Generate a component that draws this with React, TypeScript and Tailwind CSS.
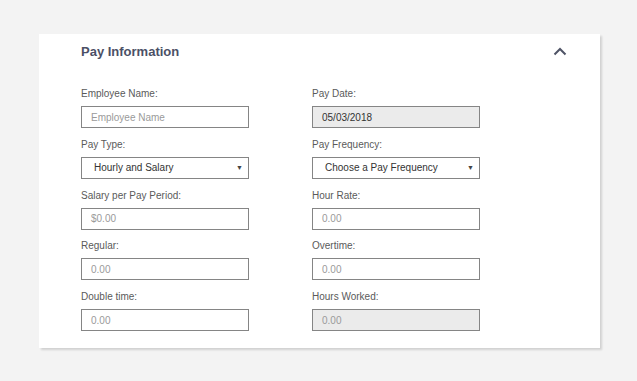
import type { ReactNode } from 'react';

type Field = {
  label: string;
  kind: 'text' | 'select' | 'readonly';
  value?: string;
  placeholder?: string;
};

const leftFields: Field[] = [
  { label: 'Employee Name:', kind: 'text', placeholder: 'Employee Name' },
  { label: 'Pay Type:', kind: 'select', value: 'Hourly and Salary' },
  { label: 'Salary per Pay Period:', kind: 'text', placeholder: '$0.00' },
  { label: 'Regular:', kind: 'text', placeholder: '0.00' },
  { label: 'Double time:', kind: 'text', placeholder: '0.00' },
];

const rightFields: Field[] = [
  { label: 'Pay Date:', kind: 'readonly', value: '05/03/2018' },
  { label: 'Pay Frequency:', kind: 'select', value: 'Choose a Pay Frequency' },
  { label: 'Hour Rate:', kind: 'text', placeholder: '0.00' },
  { label: 'Overtime:', kind: 'text', placeholder: '0.00' },
  { label: 'Hours Worked:', kind: 'readonly', placeholder: '0.00' },
];

function Control({ field }: { field: Field }) {
  const base = 'flex h-[22px] w-full items-center border border-[#858585] text-[10px]';

  if (field.kind === 'select') {
    return (
      <div className={`${base} justify-between bg-white pr-[5px] pl-[12px] text-[#333]`}>
        <span>{field.value}</span>
        <span className="text-[7px] leading-none text-[#444]">▼</span>
      </div>
    );
  }

  if (field.kind === 'readonly') {
    return (
      <div className={`${base} bg-[#ebebeb] pl-[9px] ${field.value ? 'text-[#333]' : 'text-[#9a9a9a]'}`}>
        {field.value ?? field.placeholder}
      </div>
    );
  }

  return (
    <div className={`${base} bg-white pl-[9px] text-[#9a9a9a]`}>
      {field.value ?? field.placeholder}
    </div>
  );
}

function Column({ fields }: { fields: Field[] }): ReactNode {
  return (
    <div className="flex w-[168px] flex-col gap-y-[8.75px]">
      {fields.map((field) => (
        <div key={field.label} className="flex flex-col">
          <label className="mb-[5px] text-[10px] leading-[15px] text-[#5a5a5a]">{field.label}</label>
          <Control field={field} />
        </div>
      ))}
    </div>
  );
}

export default function App() {
  return (
    <div className="h-[381px] w-[637px] overflow-hidden bg-[#f3f3f3] pt-[34px] pl-[39px] font-['Liberation_Sans',Arial,sans-serif]">
      <section className="h-[314px] w-[561px] bg-white shadow-[2px_2px_2px_rgba(0,0,0,0.14)]">
        <header className="flex items-center justify-between pt-[8px] pr-[33px] pl-[42px]">
          <h2 className="text-[13px] leading-[20px] font-bold text-[#4b5066]">Pay Information</h2>
          <svg width="14" height="9" viewBox="0 0 14 9" className="mt-[-2px]">
            <path d="M1.5 7.5 L7 2 L12.5 7.5" fill="none" stroke="#4f5466" strokeWidth="2" />
          </svg>
        </header>

        <div className="mt-[24px] flex gap-x-[63px] pl-[42px]">
          <Column fields={leftFields} />
          <div className="w-[167px]">
            <Column fields={rightFields} />
          </div>
        </div>
      </section>
    </div>
  );
}
